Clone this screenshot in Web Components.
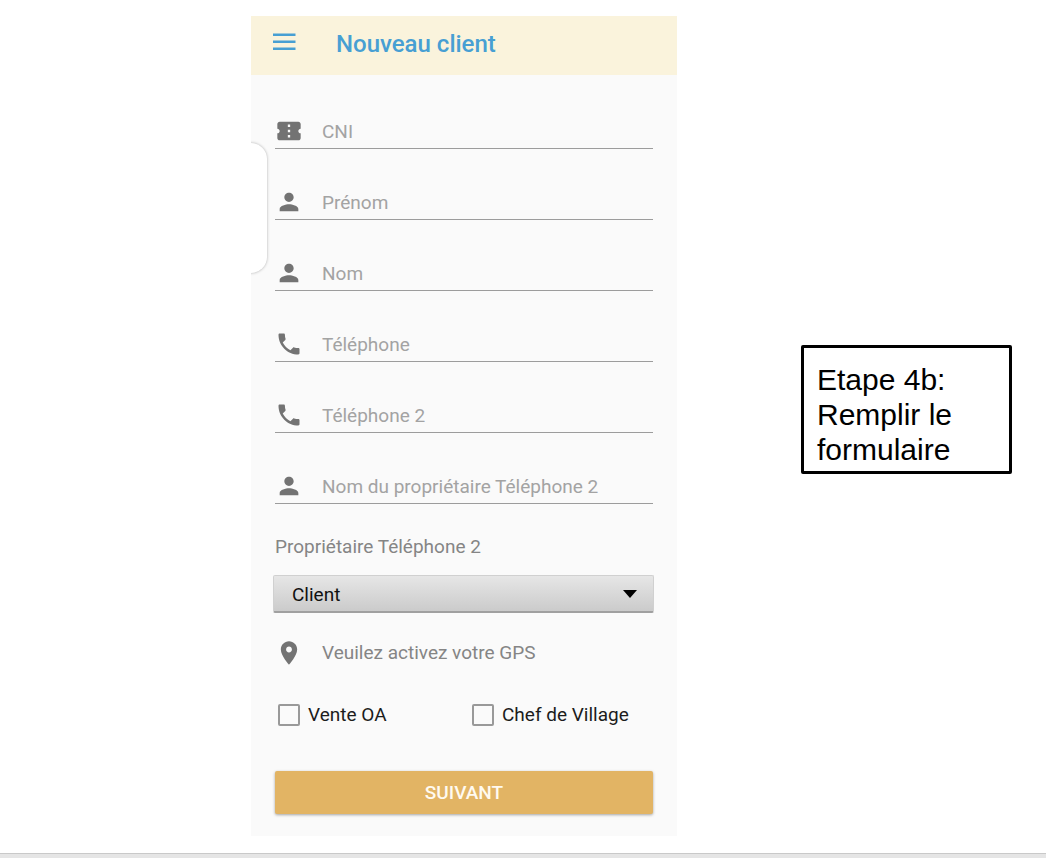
<!DOCTYPE html>
<html lang="fr">
<head>
<meta charset="utf-8">
<meta name="viewport" content="width=device-width, initial-scale=1">
<title>Nouveau client</title>
<style>
  body {
    margin: 0;
    background: #ffffff;
    font-family: Roboto, sans-serif;
  }
</style>
</head>
<body>

<guide-slide>
  <client-screen slot="screen" heading="Nouveau client">
    <form-field icon="ticket" label="CNI"></form-field>
    <form-field icon="person" label="Prénom"></form-field>
    <form-field icon="person" label="Nom"></form-field>
    <form-field icon="phone" label="Téléphone" type="tel"></form-field>
    <form-field icon="phone" label="Téléphone 2" type="tel"></form-field>
    <form-field icon="person" label="Nom du propriétaire Téléphone 2"></form-field>
    <form-select label="Propriétaire Téléphone 2" value="Client"></form-select>
    <gps-status>Veuilez activez votre GPS</gps-status>
    <check-group>
      <form-check>Vente OA</form-check>
      <form-check>Chef de Village</form-check>
    </check-group>
    <submit-button>SUIVANT</submit-button>
  </client-screen>
  <step-note slot="note">Etape 4b: Remplir le formulaire</step-note>
</guide-slide>

<script>

  const ICONS = {
    ticket: 'M22 10V6c0-1.11-.9-2-2-2H4c-1.1 0-1.99.89-1.99 2v4c1.1 0 1.99.9 1.99 2s-.89 2-2 2v4c0 1.1.9 2 2 2h16c1.1 0 2-.9 2-2v-4c-1.1 0-2-.9-2-2s.9-2 2-2zm-9 7.5h-2v-2h2v2zm0-4.5h-2v-2h2v2zm0-4.5h-2v-2h2v2z',
    person: 'M12 12c2.21 0 4-1.79 4-4s-1.79-4-4-4-4 1.79-4 4 1.79 4 4 4zm0 2c-2.67 0-8 1.34-8 4v2h16v-2c0-2.66-5.33-4-8-4z',
    phone: 'M20 15.5c-1.25 0-2.45-.2-3.57-.57-.35-.11-.74-.03-1.02.24l-2.2 2.2c-2.83-1.44-5.15-3.75-6.59-6.59l2.2-2.21c.28-.26.36-.65.25-1C8.7 6.45 8.5 5.25 8.5 4c0-.55-.45-1-1-1H4c-.55 0-1 .45-1 1 0 9.39 7.61 17 17 17 .55 0 1-.45 1-1v-3.5c0-.55-.45-1-1-1z',
    place: 'M12 2C8.13 2 5 5.13 5 9c0 5.25 7 13 7 13s7-7.75 7-13c0-3.87-3.13-7-7-7zm0 9.5c-1.38 0-2.5-1.12-2.5-2.5s1.12-2.5 2.5-2.5 2.5 1.12 2.5 2.5-1.12 2.5-2.5 2.5z'
  };

  /**
   *
   * @param {string} name
   * @returns {string}
   */
  const iconMarkup = (name) => `
    <svg viewBox="0 0 24 24" width="28" height="28" fill="#737373" aria-hidden="true"><path d="${ ICONS[name] }"/></svg>
  `;

  /**
   * GuideSlide
   *  - one page of the guide: phone screen and note side by side
   */
  class GuideSlide extends HTMLElement {

    constructor() {
      super();
      this.attachShadow({mode: 'open'}).innerHTML = `
        <style>
          :host {
            display: flex;
            flex-direction: column;
            justify-content: space-between;
            min-height: 100vh;
          }
          .slide-content {
            display: grid;
            grid-template-columns: 251fr 426fr 124fr 211fr 34fr;
            align-items: center;
            padding: 16px 0;
          }
          ::slotted([slot="screen"]) {
            grid-column: 2;
          }
          ::slotted([slot="note"]) {
            grid-column: 4;
            margin-bottom: 34px;
          }
          .slide-edge {
            height: 4px;
            border-top: 1px solid #c9c9c9;
            background: #e5e5e5;
          }
        </style>
        <main class="slide-content">
          <slot name="screen"></slot>
          <slot name="note"></slot>
        </main>
        <div class="slide-edge"></div>
      `;
    }

  }

  /**
   * ClientScreen
   *  - header and form
   */
  class ClientScreen extends HTMLElement {

    constructor() {
      super();
      this.attachShadow({mode: 'open'}).innerHTML = `
        <style>
          :host {
            display: block;
            position: relative;
            overflow: hidden;
            background: #fafafa;
          }
          header {
            display: flex;
            align-items: center;
            gap: 37px;
            box-sizing: border-box;
            height: 59px;
            padding: 0 20px 3px;
            background: #faf3dc;
            color: #479fd3;
          }
          header button {
            display: flex;
            padding: 0;
            border: 0;
            background: none;
            color: inherit;
          }
          h1 {
            margin: 0;
            font-size: 24px;
            line-height: 28px;
            font-weight: 500;
          }
          form {
            display: flex;
            flex-direction: column;
            padding: 3px 24px 22px;
          }
          /* handle of the side panel, over the left edge */
          .screen-handle {
            position: absolute;
            top: 127px;
            left: -24px;
            width: 40px;
            height: 130px;
            border-radius: 16px;
            background: #ffffff;
            box-shadow: 0 0 3px rgba(0,0,0,0.3);
          }
        </style>
        <header>
          <button type="button" aria-label="Menu">
            <svg viewBox="0 0 28 28" width="28" height="28" fill="none" stroke="currentColor" stroke-width="2.4" aria-hidden="true">
              <path d="M2 4.700h22.500M2 11.700h22.500M2 18.700h22.500"/>
            </svg>
          </button>
          <h1></h1>
        </header>
        <form>
          <slot></slot>
        </form>
        <div class="screen-handle"></div>
      `;
    }

    connectedCallback() {
      this.shadowRoot.querySelector('h1').textContent = this.getAttribute('heading');
    }

  }

  /**
   * FormField
   *  - icon and underlined text box
   */
  class FormField extends HTMLElement {

    constructor() {
      super();
      this.attachShadow({mode: 'open'});
    }

    connectedCallback() {
      const label = this.getAttribute('label');
      this.shadowRoot.innerHTML = `
        <style>
          :host {
            display: block;
          }
          label {
            display: flex;
            align-items: flex-end;
            gap: 19px;
            height: 67px;
            padding-bottom: 3px;
            border-bottom: 1px solid #9c9c9c;
          }
          input {
            flex: 1;
            min-width: 0;
            height: 28px;
            padding: 0;
            border: 0;
            outline: 0;
            background: none;
            color: #212121;
            font: 19px Roboto, sans-serif;
          }
          input::placeholder {
            color: #a3a3a3;
            opacity: 1;
          }
        </style>
        <label>
          ${ iconMarkup(this.getAttribute('icon')) }
          <input type="${ this.getAttribute('type') || 'text' }" placeholder="${ label }" aria-label="${ label }">
        </label>
      `;
    }

  }

  /**
   * FormSelect
   */
  class FormSelect extends HTMLElement {

    constructor() {
      super();
      this.attachShadow({mode: 'open'});
    }

    connectedCallback() {
      this.shadowRoot.innerHTML = `
        <style>
          :host {
            display: block;
            padding-top: 29px;
          }
          label {
            display: block;
            color: #858585;
            font-size: 19px;
            line-height: 28px;
          }
          .select-box {
            position: relative;
            margin: 14px -1px 0 -2px;
          }
          select {
            display: block;
            box-sizing: border-box;
            width: 100%;
            height: 38px;
            padding: 2px 18px 0;
            appearance: none;
            border: 1px solid #d0d0d0;
            border-bottom: 2px solid #a0a0a0;
            border-radius: 2px;
            background: linear-gradient(#e6e6e6, #cbcbcb);
            color: #111111;
            font: 19px Roboto, sans-serif;
          }
          svg {
            position: absolute;
            top: 15px;
            right: 17px;
            pointer-events: none;
          }
        </style>
        <label for="choice">${ this.getAttribute('label') }</label>
        <div class="select-box">
          <select id="choice"><option>${ this.getAttribute('value') }</option></select>
          <svg viewBox="0 0 14 8" width="14" height="8" aria-hidden="true"><path d="M0 0h14L7 8z"/></svg>
        </div>
      `;
    }

  }

  /**
   * GpsStatus
   */
  class GpsStatus extends HTMLElement {

    constructor() {
      super();
      this.attachShadow({mode: 'open'}).innerHTML = `
        <style>
          :host {
            display: flex;
            align-items: center;
            gap: 19px;
            padding-top: 26px;
            color: #858585;
            font-size: 19px;
            line-height: 28px;
          }
        </style>
        ${ iconMarkup('place') }
        <span><slot></slot></span>
      `;
    }

  }

  /**
   * CheckGroup
   */
  class CheckGroup extends HTMLElement {

    constructor() {
      super();
      this.attachShadow({mode: 'open'}).innerHTML = `
        <style>
          :host {
            display: grid;
            grid-template-columns: 194fr 184fr;
            padding: 34px 0 42px;
          }
        </style>
        <slot></slot>
      `;
    }

  }

  /**
   * FormCheck
   */
  class FormCheck extends HTMLElement {

    constructor() {
      super();
      this.attachShadow({mode: 'open'}).innerHTML = `
        <style>
          :host {
            display: block;
            padding-left: 3px;
          }
          label {
            display: flex;
            align-items: center;
            gap: 8px;
            color: #1c1c1c;
            font-size: 19px;
            line-height: 28px;
            white-space: nowrap;
          }
          input {
            appearance: none;
            box-sizing: border-box;
            width: 22px;
            height: 22px;
            margin: 0;
            border: 2px solid #999999;
            border-radius: 2px;
          }
          input:checked {
            background: #e2b464;
          }
        </style>
        <label><input type="checkbox"><span><slot></slot></span></label>
      `;
    }

  }

  /**
   * SubmitButton
   */
  class SubmitButton extends HTMLElement {

    constructor() {
      super();
      this.attachShadow({mode: 'open'}).innerHTML = `
        <style>
          :host {
            display: block;
          }
          button {
            display: block;
            width: 100%;
            height: 43px;
            padding: 0;
            border: 0;
            border-radius: 2px;
            background: #e2b464;
            box-shadow: 0 1px 3px rgba(0,0,0,0.35);
            color: #fffaf0;
            font: 500 19px Roboto, sans-serif;
          }
        </style>
        <button type="button"><slot></slot></button>
      `;
    }

  }

  /**
   * StepNote
   */
  class StepNote extends HTMLElement {

    constructor() {
      super();
      this.attachShadow({mode: 'open'}).innerHTML = `
        <style>
          :host {
            display: block;
            padding: 14px 48px 4px 13px;
            border: 3px solid #000000;
            border-radius: 2px;
            color: #000000;
            font-family: "Liberation Sans", Arial, sans-serif;
            font-size: 30px;
            line-height: 35px;
          }
          p {
            margin: 0;
          }
        </style>
        <p><slot></slot></p>
      `;
    }

  }

  customElements.define('guide-slide', GuideSlide);
  customElements.define('client-screen', ClientScreen);
  customElements.define('form-field', FormField);
  customElements.define('form-select', FormSelect);
  customElements.define('gps-status', GpsStatus);
  customElements.define('check-group', CheckGroup);
  customElements.define('form-check', FormCheck);
  customElements.define('submit-button', SubmitButton);
  customElements.define('step-note', StepNote);

</script>
</body>
</html>
